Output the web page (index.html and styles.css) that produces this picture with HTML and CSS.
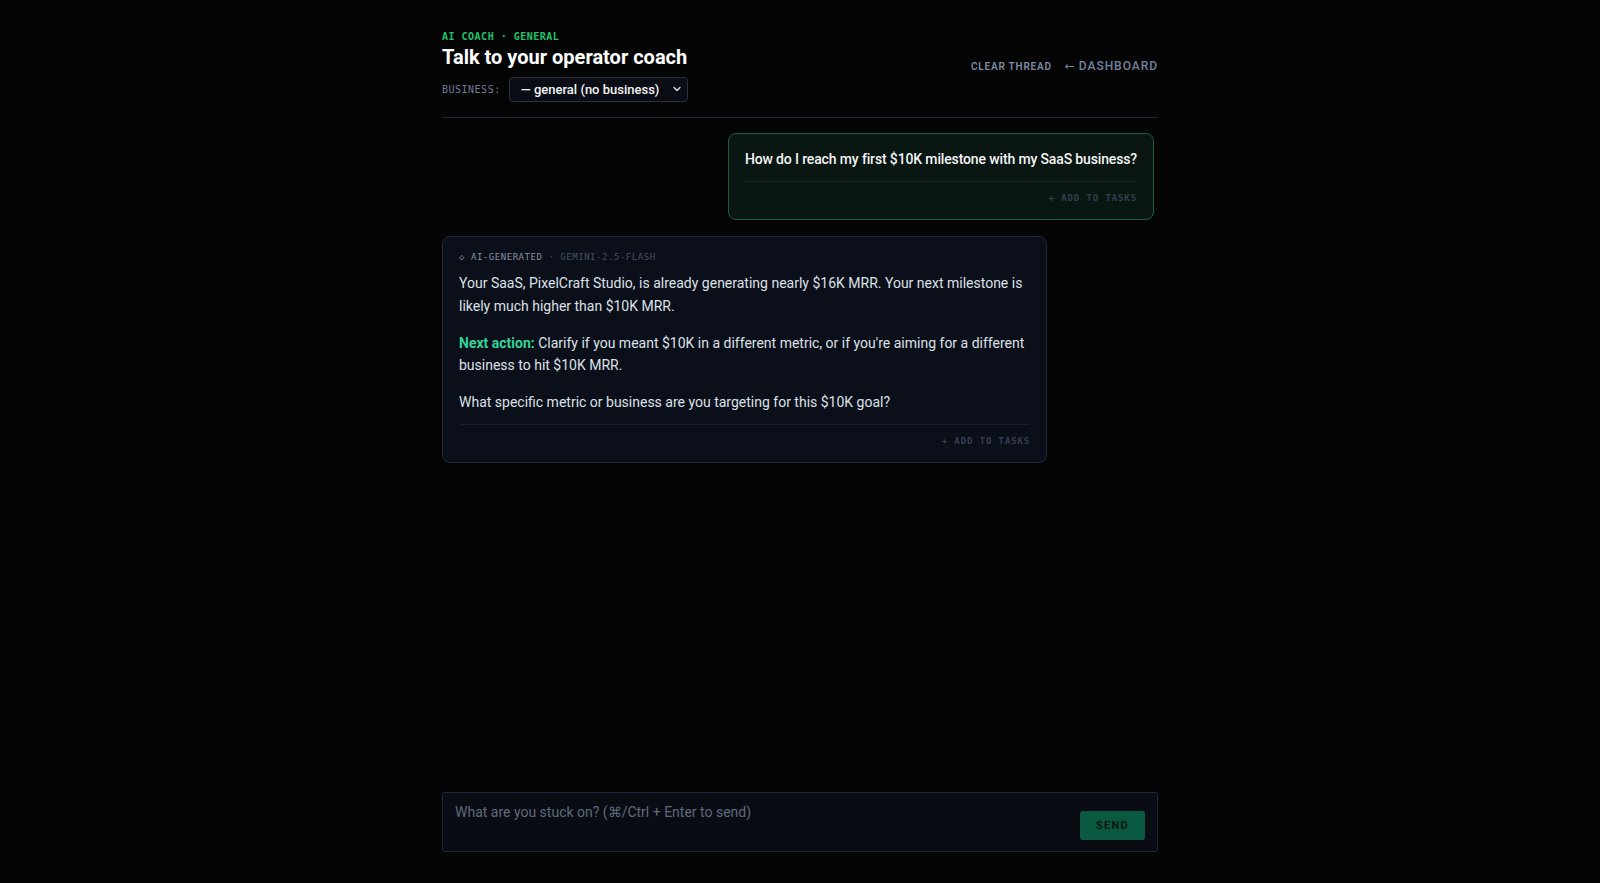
FILE: index.html
```
<!DOCTYPE html>
<html lang="en">
<head>
	<meta charset="UTF-8">
	<title>AI coach</title>
	<link rel="stylesheet" href="styles.css">
</head>
<body>
	<div class="page">
		<header class="top">
			<div class="top-left">
				<div class="eyebrow">AI COACH · GENERAL</div>
				<h1>Talk to your operator coach</h1>
				<div class="biz-row">
					<span class="biz-label">BUSINESS:</span>
					<div class="select-wrap">
						<select class="biz-select">
							<option>— general (no business) —</option>
						</select>
						<svg class="chev" width="10" height="10" viewBox="0 0 10 10"><path d="M2 3.5 L5 6.5 L8 3.5" fill="none" stroke="#e5e7eb" stroke-width="1.3" stroke-linecap="round" stroke-linejoin="round"/></svg>
					</div>
				</div>
			</div>
			<nav class="top-links">
				<a href="#" class="clear">CLEAR THREAD</a>
				<a href="#" class="back"><span class="arrow">←</span> DASHBOARD</a>
			</nav>
		</header>

		<div class="thread">
			<div class="msg user">
				<p>How do I reach my first $10K milestone with my SaaS business?</p>
				<div class="msg-actions"><a href="#">+ ADD TO TASKS</a></div>
			</div>
			<div class="msg ai">
				<div class="ai-meta"><span class="ai-tag">◇ AI-GENERATED</span> · GEMINI-2.5-FLASH</div>
				<p>Your SaaS, PixelCraft Studio, is already generating nearly $16K MRR. Your next milestone is likely much higher than $10K MRR.</p>
				<p><strong>Next action:</strong> Clarify if you meant $10K in a different metric, or if you're aiming for a different business to hit $10K MRR.</p>
				<p>What specific metric or business are you targeting for this $10K goal?</p>
				<div class="msg-actions"><a href="#">+ ADD TO TASKS</a></div>
			</div>
		</div>

		<form class="composer">
			<textarea placeholder="What are you stuck on? (⌘/Ctrl + Enter to send)"></textarea>
			<button type="button" class="send">SEND</button>
		</form>
	</div>
</body>
</html>
```

FILE: styles.css
```
* {
	margin: 0;
	padding: 0;
	box-sizing: border-box;
}
html, body {
	height: 100%;
}
body {
	background-color: #050506;
	color: #e5e7eb;
	font-family: Roboto, "Noto Sans", sans-serif;
}
a {
	text-decoration: none;
}
.page {
	width: 716px;
	height: 100vh;
	margin: 0 auto;
	padding: 30px 0 31px;
	display: flex;
	flex-direction: column;
}
.top {
	display: flex;
	justify-content: space-between;
	align-items: center;
	padding-bottom: 15px;
	border-bottom: 1px solid #1c2333;
}
.eyebrow {
	font-family: "DejaVu Sans Mono", monospace;
	font-size: 10px;
	font-weight: bold;
	line-height: 14px;
	letter-spacing: 0.05em;
	color: #1fc46a;
}
h1 {
	font-size: 20px;
	font-weight: 700;
	line-height: 26px;
	color: #fff;
}
.biz-row {
	display: flex;
	align-items: center;
	gap: 8px;
	margin-top: 7px;
}
.biz-label {
	font-family: "DejaVu Sans Mono", monospace;
	font-size: 10px;
	letter-spacing: 0.05em;
	color: #6f7b91;
}
.select-wrap {
	position: relative;
}
.biz-select {
	appearance: none;
	-webkit-appearance: none;
	height: 25px;
	width: 179px;
	padding: 0 24px 0 11px;
	background-color: #0a0d14;
	border: 1px solid #2a3242;
	border-radius: 4px;
	color: #f3f4f6;
	font-family: Roboto, sans-serif;
	font-size: 13px;
	font-weight: 500;
}
.chev {
	position: absolute;
	right: 6px;
	top: 7px;
	pointer-events: none;
}
.top-links {
	display: flex;
	align-items: center;
	gap: 13px;
}
.clear {
	font-size: 10px;
	font-weight: 600;
	letter-spacing: 0.08em;
	color: #7d8aa3;
}
.back {
	font-size: 12px;
	font-weight: 500;
	letter-spacing: 0.08em;
	color: #71819c;
}
.back .arrow {
	font-family: "DejaVu Sans", sans-serif;
	font-size: 12px;
	letter-spacing: 0;
}
.thread {
	flex: 1;
	display: flex;
	flex-direction: column;
	gap: 16px;
	padding: 15px 4px 0 0;
	overflow: hidden;
}
.msg {
	max-width: 85%;
	padding: 12px 16px 12px;
	border-radius: 8px;
	font-size: 14px;
	line-height: 22.5px;
}
.msg.user {
	align-self: flex-end;
	padding-top: 13px;
	background-color: #0a1611;
	border: 1px solid #1c5e3e;
	color: #f3f4f6;
	font-weight: 500;
	letter-spacing: -0.01em;
}
.msg.user p {
	line-height: 24px;
}
.msg.ai {
	align-self: flex-start;
	background-color: #0b0f19;
	border: 1px solid #222a3a;
	color: #dde1e8;
}
.msg.ai p + p {
	margin-top: 14.5px;
}
.msg.ai strong {
	color: #34d399;
	font-weight: 700;
}
.ai-meta {
	font-family: "DejaVu Sans Mono", monospace;
	font-size: 9px;
	line-height: 16px;
	letter-spacing: 0.06em;
	color: #464f61;
	margin-bottom: 7px;
}
.ai-tag {
	color: #868fa1;
}
.msg-actions {
	margin-top: 10px;
	padding-top: 5px;
	border-top: 1px solid #182030;
	text-align: right;
	line-height: 18px;
	letter-spacing: 0;
}
.msg.user .msg-actions {
	border-top-color: #14271e;
}
.msg-actions a {
	font-family: "DejaVu Sans Mono", monospace;
	font-size: 9px;
	font-weight: bold;
	letter-spacing: 0.1em;
	color: #363f51;
}
.composer {
	display: flex;
	align-items: flex-end;
	gap: 12px;
	padding: 9px 12px 11px;
	background-color: #0a0c13;
	border: 1px solid #1d2738;
	border-radius: 3px;
}
.composer textarea {
	flex: 1;
	height: 38px;
	resize: none;
	border: none;
	outline: none;
	background: transparent;
	color: #e5e7eb;
	font-family: Roboto, sans-serif;
	font-size: 14px;
	line-height: 20px;
}
.composer textarea::placeholder {
	color: #5f6a7e;
}
.send {
	width: 65px;
	height: 29px;
	border: none;
	border-radius: 3px;
	background-color: #0a5a41;
	color: #0a1510;
	font-family: Roboto, sans-serif;
	font-size: 11px;
	font-weight: 700;
	letter-spacing: 0.12em;
}
```
